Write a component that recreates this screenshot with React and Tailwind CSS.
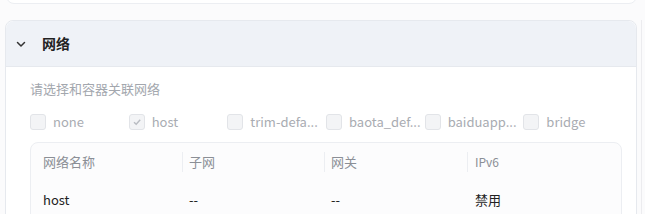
export default function App() {
  // 列表里的名称按原图截断显示
  const nets = [
    { name: 'none', checked: false },
    { name: 'host', checked: true },
    { name: 'trim-defa...', checked: false },
    { name: 'baota_def...', checked: false },
    { name: 'baiduapp...', checked: false },
    { name: 'bridge', checked: false },
  ]

  return (
    <div
      className="h-[214px] w-[645px] overflow-hidden bg-[#fbfbfc] relative"
      style={{ fontFamily: '"Noto Sans CJK SC", "Noto Sans", sans-serif' }}
    >
      {/* 上一张卡片的底部 */}
      <div className="mx-[6px] mt-[-20px] h-[24px] w-[631px] rounded-b-[8px] border border-[#eceef2] bg-white" />

      {/* 网络卡片 */}
      <div className="ml-[5px] mt-[16px] w-[632px] rounded-t-[8px] border border-[#e6e9ee] bg-white">
        <div className="flex h-[46px] items-center rounded-t-[8px] border-b border-[#e6e9ee] bg-[#eff2f7] pl-[9px]">
          <svg width="12" height="12" viewBox="0 0 12 12" className="mr-[15px]">
            <path d="M2.5 4.5 L6 8 L9.5 4.5" fill="none" stroke="#333" strokeWidth="1.5" strokeLinecap="round" strokeLinejoin="round" />
          </svg>
          <span className="text-[14px] font-bold text-[#222]">网络</span>
        </div>

        <div className="pl-[24px] pr-[14px] pt-[12px]">
          <div className="text-[13px] leading-[20px] text-[#a3a7ae]">请选择和容器关联网络</div>

          <div className="mt-[13px] flex h-[20px] items-center">
            {nets.map((n) => (
              <div key={n.name} className="flex w-[99px] items-center">
                <div className="flex h-[16px] w-[16px] flex-shrink-0 items-center justify-center rounded-[3px] border border-[#e2e4e8] bg-[#f3f4f6]">
                  {n.checked && (
                    <svg width="10" height="10" viewBox="0 0 10 10">
                      <path d="M2 5.2 L4.2 7.3 L8.2 2.8" fill="none" stroke="#b9bcc2" strokeWidth="1.4" />
                    </svg>
                  )}
                </div>
                <span className="ml-[7px] whitespace-nowrap text-[13px] text-[#a9acb2]">{n.name}</span>
              </div>
            ))}
          </div>

          {/* 表格 */}
          <div className="mt-[10px] w-[592px] rounded-t-[8px] border border-[#eceef2] bg-[#fcfcfd]">
            <div className="grid h-[37px] grid-cols-[151px_142px_143px_1fr] items-center text-[13px] text-[#8b8f96]">
              <div className="pl-[12px]">网络名称</div>
              <div className="border-l border-[#eceef2] pl-[6px] leading-[20px]">子网</div>
              <div className="border-l border-[#eceef2] pl-[6px] leading-[20px]">网关</div>
              <div className="border-l border-[#eceef2] pl-[7px] leading-[20px] text-[12px]">IPv6</div>
            </div>
            <div className="grid h-[40px] grid-cols-[151px_142px_143px_1fr] items-center text-[13px] text-[#222]">
              <div className="pl-[12px]">host</div>
              <div className="pl-[7px]">--</div>
              <div className="pl-[7px]">--</div>
              <div className="pl-[8px]">禁用</div>
            </div>
          </div>
        </div>
      </div>

      {/* 右侧细线 */}
      <div className="absolute right-[3px] top-[20px] h-[194px] w-px bg-[#ececef]" />
    </div>
  )
}
